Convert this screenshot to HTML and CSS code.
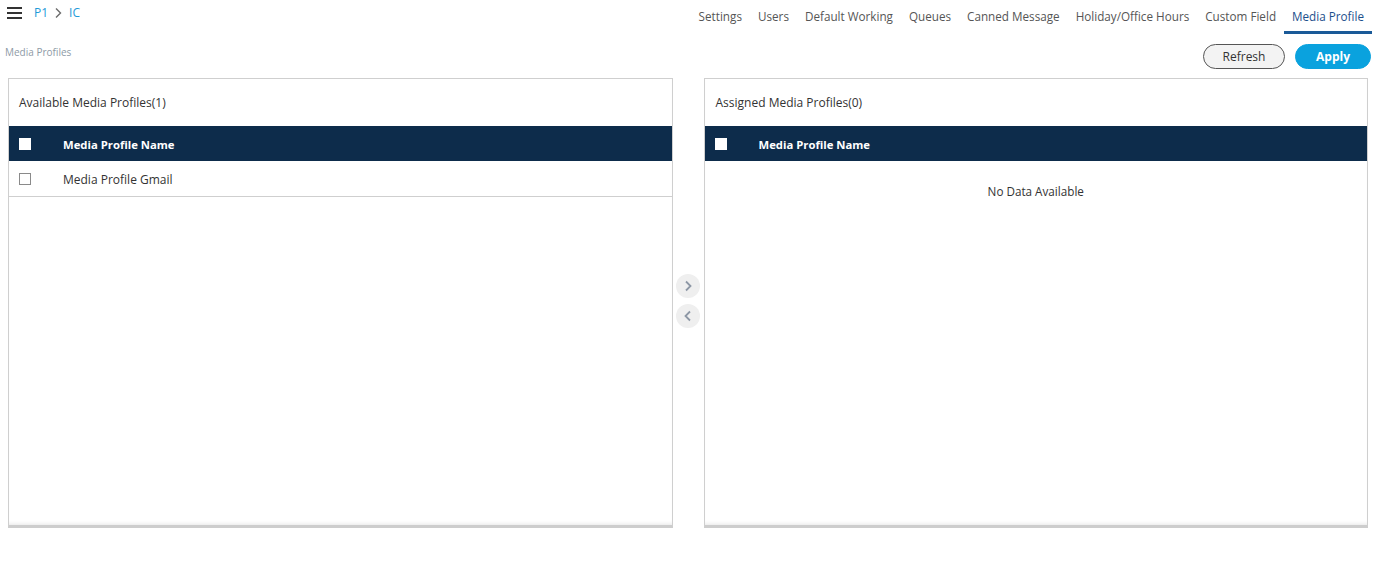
FILE: index.html
```html
<!DOCTYPE html>
<html>
<head>
<meta charset="utf-8">
<link rel="stylesheet" href="styles.css">
</head>
<body>
<div class="topbar">
  <div class="crumbs">
    <span class="burger"><i></i><i></i><i></i></span>
    <span class="crumb">P1</span>
    <svg class="sep" width="8" height="12" viewBox="0 0 8 12"><path d="M2 1.5l4.5 4.5-4.5 4.5" fill="none" stroke="#6b6b6b" stroke-width="1.4"/></svg>
    <span class="crumb">IC</span>
  </div>
  <nav class="tabs">
    <a class="tab">Settings</a>
    <a class="tab">Users</a>
    <a class="tab">Default Working</a>
    <a class="tab">Queues</a>
    <a class="tab">Canned Message</a>
    <a class="tab">Holiday/Office Hours</a>
    <a class="tab">Custom Field</a>
    <a class="tab active">Media Profile</a>
  </nav>
</div>
<div class="subbar">
  <div class="pagetitle">Media Profiles</div>
  <div class="actions">
    <button class="btn refresh">Refresh</button>
    <button class="btn apply">Apply</button>
  </div>
</div>
<div class="lists">
  <section class="panel">
    <div class="ptitle">Available Media Profiles(1)</div>
    <div class="thead"><span class="cb white"></span><span class="col">Media Profile Name</span></div>
    <div class="trow"><span class="cb"></span><span class="col">Media Profile Gmail</span></div>
  </section>
  <div class="mover">
    <span class="circ"><svg width="10" height="14" viewBox="0 0 10 14"><path d="M3 2.5l4.5 4.5L3 11.5" fill="none" stroke="#8d97a5" stroke-width="1.8"/></svg></span>
    <span class="circ"><svg width="10" height="14" viewBox="0 0 10 14"><path d="M7 2.5L2.5 7 7 11.5" fill="none" stroke="#8d97a5" stroke-width="1.8"/></svg></span>
  </div>
  <section class="panel right">
    <div class="ptitle">Assigned Media Profiles(0)</div>
    <div class="thead"><span class="cb white"></span><span class="col">Media Profile Name</span></div>
    <div class="nodata">No Data Available</div>
  </section>
</div>
</body>
</html>
```
FILE: styles.css
```css
* { box-sizing: border-box; }
body {
  margin: 0;
  font-family: "Open Sans", "Noto Sans", sans-serif;
  font-size: 12px;
  color: #333;
  background: #fff;
}
.topbar {
  display: flex;
  justify-content: space-between;
  align-items: flex-start;
  height: 35px;
}
.crumbs {
  display: flex;
  align-items: center;
  gap: 5px;
  padding: 4px 0 0 7px;
}
.burger {
  display: flex;
  flex-direction: column;
  gap: 3px;
  width: 15px;
  margin-right: 7px;
}
.burger i {
  display: block;
  height: 2px;
  background: #333;
}
.crumb { color: #1f9ad8; font-size: 12px; }
.sep { margin: 0 2px 0 1px; }
.tabs {
  display: flex;
  margin-right: 4px;
}
.tab {
  padding: 8px 8px 7px;
  color: #555;
  font-size: 11.7px;
  border-bottom: 3px solid transparent;
  white-space: nowrap;
}
.tab.active {
  color: #1d4f8c;
  border-bottom-color: #1a5a98;
}
.subbar {
  display: flex;
  justify-content: space-between;
  align-items: flex-start;
  height: 43px;
  padding-top: 9px;
}
.pagetitle {
  font-size: 10px;
  color: #8e9aa6;
  padding: 1px 0 0 5px;
}
.actions {
  display: flex;
  gap: 10px;
  margin-right: 5px;
}
.btn {
  height: 25px;
  border-radius: 13px;
  font-family: inherit;
  font-size: 12px;
  padding: 0;
  cursor: pointer;
}
.refresh {
  width: 82px;
  background: #f3f3f3;
  border: 1px solid #555;
  color: #333;
}
.apply {
  width: 76px;
  background: #0aa2de;
  border: 1px solid #0aa2de;
  color: #fff;
  font-weight: 700;
}
.lists {
  display: flex;
  padding: 0 8px;
  height: 450px;
}
.panel {
  flex: 1;
  border: 1px solid #cfcfcf;
  border-bottom: 3px solid #cdcdcd;
  box-shadow: inset 0 -4px 4px -3px #e6e6e6;
}
.ptitle {
  height: 47px;
  display: flex;
  align-items: center;
  padding: 0 0 1px 10px;
  color: #333;
}
.right .ptitle { padding-left: 11px; }
.thead, .trow {
  display: flex;
  align-items: center;
  height: 35px;
}
.thead {
  background: #0d2c4b;
  color: #fff;
  font-weight: 700;
  font-size: 11.3px;
  padding-top: 2px;
}
.trow {
  height: 36px;
  border-bottom: 1px solid #cfcfcf;
  padding-top: 2px;
}
.cb {
  width: 12px;
  height: 12px;
  margin: 0 32px 0 10px;
  border: 1px solid #8a8a8a;
  background: #fff;
}
.thead .cb { margin-top: -2px; }
.trow .cb { margin-top: -2px; }
.cb.white { border-color: #fff; }
.nodata {
  text-align: center;
  padding-top: 22px;
  font-size: 11.7px;
}
.mover {
  width: 31px;
  display: flex;
  flex-direction: column;
  align-items: center;
  padding-top: 196px;
  gap: 6px;
}
.circ {
  width: 24px;
  height: 24px;
  border-radius: 50%;
  background: #efefef;
  display: flex;
  align-items: center;
  justify-content: center;
}
```
